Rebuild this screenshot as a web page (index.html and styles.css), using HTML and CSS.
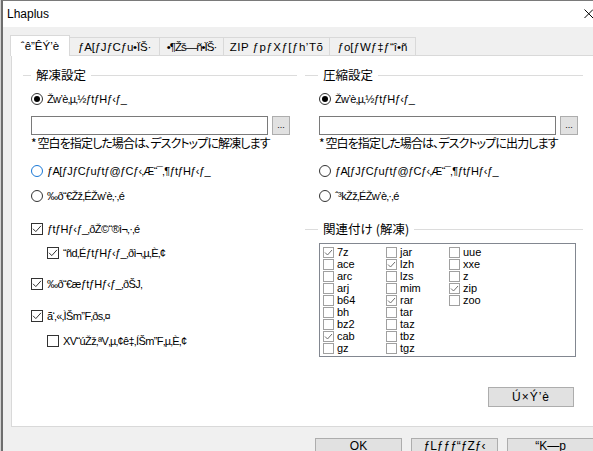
FILE: index.html
```html
<!DOCTYPE html>
<html lang="ja">
<head>
<meta charset="utf-8">
<title>Lhaplus</title>
<link rel="stylesheet" href="styles.css">
</head>
<body>
<div class="window">
  <div class="titlebar">
    <span class="title">Lhaplus</span>
    <svg class="close" width="10" height="10" viewBox="0 0 10 10"><path d="M0.5 0.5 L9 9 M9 0.5 L0.5 9" stroke="#000" stroke-width="1" fill="none"/></svg>
  </div>
  <div class="client">
    <div class="tabs">
      <div class="tab active tab-general">ˆê”ÊÝ’è</div>
      <div class="tab tab-archive">ƒA[ƒJƒCƒu•ÏŠ·</div>
      <div class="tab tab-string">•¶Žš—ñ•ÏŠ·</div>
      <div class="tab tab-zip">ZIP ƒpƒXƒ[ƒh’Tõ</div>
      <div class="tab tab-version">ƒo[ƒWƒ‡ƒ“î•ñ</div>
    </div>
    <div class="panel">
      <div class="col col-left">
        <div class="group-head"><span>解凍設定</span></div>
        <div class="group-body">
          <div class="opt"><span class="radio checked"></span><span>Žw’è‚µ‚½ƒtƒHƒ‹ƒ_</span></div>
          <div class="path-row"><div class="path-input"></div><div class="browse-btn">...</div></div>
          <div class="note">* 空白を指定した場合は、デスクトップに解凍します</div>
          <div class="opt gap-12"><span class="radio focus"></span><span>ƒA[ƒJƒCƒuƒtƒ@ƒCƒ‹‚Æ“¯‚¶ƒtƒHƒ‹ƒ_</span></div>
          <div class="opt"><span class="radio"></span><span>‰ð“€Žž‚ÉŽw’è‚·‚é</span></div>
          <div class="opt gap-17"><span class="check"><svg viewBox="0 0 10 10"><path d="M1 4.8 L3.8 7.6 L9 1.8" stroke="#333" fill="none"/></svg></span><span>ƒtƒHƒ‹ƒ_‚ðŽ©“®ì¬‚·‚é</span></div>
          <div class="opt sub gap-8"><span class="check"><svg viewBox="0 0 10 10"><path d="M1 4.8 L3.8 7.6 L9 1.8" stroke="#333" fill="none"/></svg></span><span>“ñd‚ÉƒtƒHƒ‹ƒ_‚ðì¬‚µ‚È‚¢</span></div>
          <div class="opt gap-15"><span class="check"><svg viewBox="0 0 10 10"><path d="M1 4.8 L3.8 7.6 L9 1.8" stroke="#333" fill="none"/></svg></span><span>‰ð“€æƒtƒHƒ‹ƒ_‚ðŠJ‚­</span></div>
          <div class="opt gap-16"><span class="check"><svg viewBox="0 0 10 10"><path d="M1 4.8 L3.8 7.6 L9 1.8" stroke="#333" fill="none"/></svg></span><span>ã‘‚«‚ÌŠm”F‚ðs‚¤</span></div>
          <div class="opt sub"><span class="check"></span><span>XV“úŽž‚ªV‚µ‚¢ê‡‚ÍŠm”F‚µ‚È‚¢</span></div>
        </div>
      </div>
      <div class="col col-right">
        <div class="group-head wide"><span>圧縮設定</span></div>
        <div class="group-body">
          <div class="opt"><span class="radio checked"></span><span>Žw’è‚µ‚½ƒtƒHƒ‹ƒ_</span></div>
          <div class="path-row"><div class="path-input"></div><div class="browse-btn">...</div></div>
          <div class="note">* 空白を指定した場合は、デスクトップに出力します</div>
          <div class="opt gap-12"><span class="radio"></span><span>ƒA[ƒJƒCƒuƒtƒ@ƒCƒ‹‚Æ“¯‚¶ƒtƒHƒ‹ƒ_</span></div>
          <div class="opt"><span class="radio"></span><span>ˆ³kŽž‚ÉŽw’è‚·‚é</span></div>
        </div>
        <div class="group-head wide assoc-head"><span>関連付け (解凍)</span></div>
        <div class="group-body">
          <div class="assoc-list">
            <div class="assoc-item"><span class="assoc-box on"></span>7z</div>
            <div class="assoc-item"><span class="assoc-box"></span>ace</div>
            <div class="assoc-item"><span class="assoc-box"></span>arc</div>
            <div class="assoc-item"><span class="assoc-box"></span>arj</div>
            <div class="assoc-item"><span class="assoc-box"></span>b64</div>
            <div class="assoc-item"><span class="assoc-box"></span>bh</div>
            <div class="assoc-item"><span class="assoc-box"></span>bz2</div>
            <div class="assoc-item"><span class="assoc-box on"></span>cab</div>
            <div class="assoc-item"><span class="assoc-box"></span>gz</div>
            <div class="assoc-item"><span class="assoc-box"></span>jar</div>
            <div class="assoc-item"><span class="assoc-box on"></span>lzh</div>
            <div class="assoc-item"><span class="assoc-box"></span>lzs</div>
            <div class="assoc-item"><span class="assoc-box"></span>mim</div>
            <div class="assoc-item"><span class="assoc-box on"></span>rar</div>
            <div class="assoc-item"><span class="assoc-box"></span>tar</div>
            <div class="assoc-item"><span class="assoc-box"></span>taz</div>
            <div class="assoc-item"><span class="assoc-box"></span>tbz</div>
            <div class="assoc-item"><span class="assoc-box"></span>tgz</div>
            <div class="assoc-item"><span class="assoc-box"></span>uue</div>
            <div class="assoc-item"><span class="assoc-box"></span>xxe</div>
            <div class="assoc-item"><span class="assoc-box"></span>z</div>
            <div class="assoc-item"><span class="assoc-box on"></span>zip</div>
            <div class="assoc-item"><span class="assoc-box"></span>zoo</div>
          </div>
          <div class="detail-btn">Ú×Ý’è</div>
        </div>
      </div>
    </div>
    <div class="footer">
      <div class="btn">OK</div>
      <div class="btn">ƒLƒƒƒ“ƒZƒ‹</div>
      <div class="btn">“K—p</div>
    </div>
  </div>
</div>
</body>
</html>
```
FILE: styles.css
```css
html, body {
  margin: 0;
  padding: 0;
  overflow: hidden;
}
body {
  background: #d2d2d2;
  padding-left: 1px;
  font-family: "Liberation Sans", Arial, sans-serif;
  font-size: 12px;
  color: #000;
}
.window {
  width: 601px;
  height: 480px;
  border-top: 1px solid #7a7a7a;
  border-left: 2px solid #6e6e6e;
  display: flex;
  flex-direction: column;
  background: #f0f0f0;
}
.titlebar {
  height: 26px;
  flex: none;
  background: #fff;
  display: flex;
  align-items: center;
  justify-content: space-between;
  padding: 0 10px 0 4px;
}
.title {
  font-size: 12px;
}
.close {
  display: block;
}
.client {
  flex: 1;
  padding: 8px 10px 0 8px;
  display: flex;
  flex-direction: column;
}
.tabs {
  display: flex;
  align-items: flex-end;
  height: 20px;
  margin-left: -1px;
  position: relative;
  z-index: 1;
}
.tab {
  height: 18px;
  box-sizing: border-box;
  border: 1px solid #d9d9d9;
  border-bottom: none;
  margin-left: -1px;
  display: flex;
  align-items: center;
  justify-content: center;
  white-space: nowrap;
  background: #f0f0f0;
  font-size: 11.5px;
}
.tab.active {
  height: 21px;
  margin-left: 0;
  margin-bottom: -1px;
  background: #fff;
}
.tab-general { width: 60px; }
.tab-archive { width: 91px; letter-spacing: -0.2px; }
.tab-string { width: 65px; letter-spacing: -1px; }
.tab-zip { width: 107px; letter-spacing: 0.5px; }
.tab-version { width: 87px; }
.panel {
  flex: none;
  height: 372px;
  box-sizing: border-box;
  border: 1px solid #d9d9d9;
  background: #fff;
  display: flex;
  gap: 8px;
  padding: 12px 0 0 11px;
}
.col {
  display: flex;
  flex-direction: column;
}
.col-left { width: 274px; }
.col-right { width: 278px; }
.group-head {
  display: flex;
  align-items: center;
  height: 14px;
  font-family: "Noto Sans CJK JP", sans-serif;
  font-size: 12.5px;
  white-space: nowrap;
}
.group-head::before {
  content: "";
  width: 8px;
  border-top: 1px solid #dcdcdc;
}
.group-head::after {
  content: "";
  flex: 1;
  border-top: 1px solid #dcdcdc;
}
.group-head span {
  margin: 0 5px;
  line-height: 14px;
}
.group-head.wide::before { width: 13px; }
.assoc-head { margin-top: 18px; }
.group-body {
  display: flex;
  flex-direction: column;
  padding-left: 8px;
}
.col-right .group-body { padding-left: 14px; }
.opt {
  display: flex;
  align-items: center;
  gap: 4px;
  height: 16px;
  margin-top: 9px;
  white-space: nowrap;
  font-size: 11px;
  letter-spacing: -0.6px;
}
.opt.sub { margin-left: 16px; }
.gap-8 { margin-top: 8px; }
.gap-12 { margin-top: 12px; }
.gap-15 { margin-top: 15px; }
.gap-16 { margin-top: 16px; }
.gap-17 { margin-top: 17px; }
.radio {
  width: 12px;
  height: 12px;
  box-sizing: border-box;
  border: 1px solid #333;
  border-radius: 50%;
  background: #fff;
  flex: none;
  display: flex;
  align-items: center;
  justify-content: center;
}
.radio.focus { border-color: #1a78d6; }
.radio.checked::after {
  content: "";
  width: 6px;
  height: 6px;
  border-radius: 50%;
  background: #000;
}
.check {
  width: 12px;
  height: 12px;
  box-sizing: border-box;
  border: 1px solid #333;
  background: #fff;
  flex: none;
  display: flex;
}
.check svg {
  width: 10px;
  height: 10px;
}
.path-row {
  display: flex;
  gap: 4px;
  height: 19px;
  margin-top: 9px;
}
.path-input {
  width: 237px;
  box-sizing: border-box;
  border: 1px solid #7a7a7a;
  background: #fff;
}
.browse-btn {
  width: 18px;
  box-sizing: border-box;
  border: 1px solid #adadad;
  background: #e1e1e1;
  font-size: 9px;
  line-height: 1;
  display: flex;
  align-items: flex-end;
  justify-content: center;
  padding-bottom: 4px;
}
.note {
  height: 16px;
  line-height: 16px;
  font-family: "Noto Sans CJK JP", sans-serif;
  font-size: 12px;
  font-feature-settings: "palt";
  letter-spacing: -0.9px;
  white-space: nowrap;
}
.assoc-list {
  margin-top: 7px;
  width: 257px;
  height: 114px;
  box-sizing: border-box;
  border: 1px solid #828790;
  padding: 2px 0 0 3px;
  display: grid;
  grid-template-rows: repeat(9, 12px);
  grid-auto-flow: column;
  grid-auto-columns: 63px;
  font-size: 11px;
  line-height: 12px;
}
.assoc-item {
  display: flex;
  align-items: center;
  gap: 3px;
  height: 12px;
  overflow: hidden;
}
.assoc-box {
  width: 11px;
  height: 11px;
  box-sizing: border-box;
  border: 1px solid #a0a0a0;
  background: #fff;
  flex: none;
}
.assoc-box.on {
  background: #fff url("data:image/svg+xml,%3Csvg xmlns='http://www.w3.org/2000/svg' viewBox='0 0 9 9'%3E%3Cpath d='M1 4.5 L3.5 7 L8 2' stroke='%23707070' fill='none'/%3E%3C/svg%3E") center / 9px 9px no-repeat;
}
.detail-btn {
  align-self: flex-end;
  margin: 30px 9px 0 0;
  width: 86px;
  height: 20px;
  box-sizing: border-box;
  border: 1px solid #adadad;
  background: #e1e1e1;
  display: flex;
  align-items: center;
  justify-content: center;
  letter-spacing: 1px;
}
.footer {
  display: flex;
  justify-content: flex-end;
  gap: 9px;
  padding-top: 11px;
}
.btn {
  width: 87px;
  height: 23px;
  box-sizing: border-box;
  border: 1px solid #adadad;
  background: #e1e1e1;
  display: flex;
  align-items: flex-start;
  justify-content: center;
  padding-top: 1px;
  line-height: 12px;
  white-space: nowrap;
}
```
